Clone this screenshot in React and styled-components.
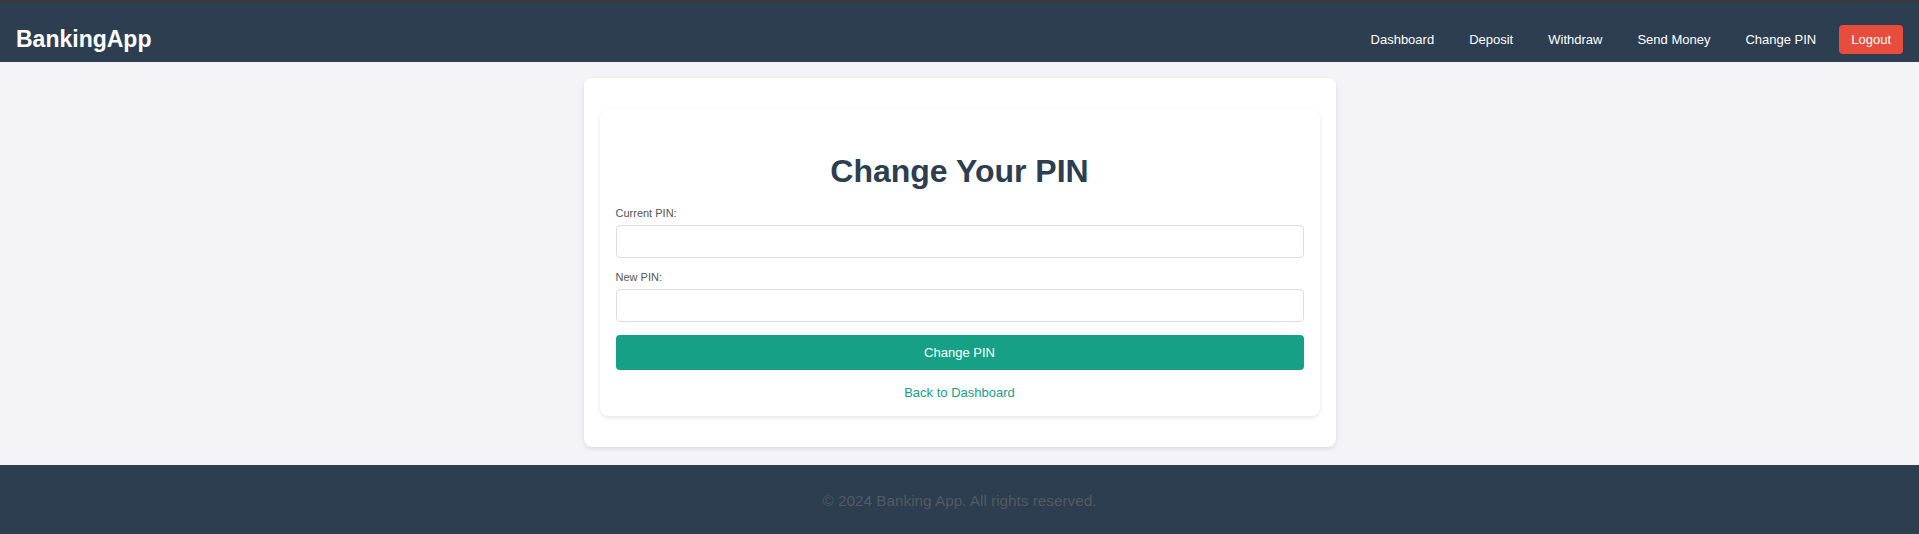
import styled, { createGlobalStyle } from "styled-components";

const GlobalStyle = createGlobalStyle`
  body {
    margin: 0;
    font-family: "Liberation Sans", Arial, sans-serif;
    background-color: #f4f4f8;
  }
`;

const Header = styled.header`
  display: flex;
  justify-content: space-between;
  align-items: center;
  padding: 15px 16px 0;
  box-sizing: border-box;
  height: 62px;
  border-top: 2px solid #3a3a3a;
  background-color: #2c3e50;
`;

const Logo = styled.div`
  font-size: 23px;
  font-weight: 700;
  color: #ffffff;
`;

const Nav = styled.nav`
  display: flex;
  align-items: center;
  gap: 11px;
`;

const NavLink = styled.a`
  padding: 6px 12px;
  font-size: 13px;
  color: #ffffff;
  text-decoration: none;
  cursor: pointer;
`;

const LogoutButton = styled.button`
  border: none;
  padding: 7px 12px;
  border-radius: 4px;
  font-family: inherit;
  font-size: 13px;
  color: #ffffff;
  background-color: #e74c3c;
  cursor: pointer;
`;

const Main = styled.main`
  padding: 16px 0 18px;
  background-color: #f4f4f8;
`;

const Container = styled.div`
  width: 752px;
  margin: 0 auto;
  padding: 32px 16px 31px;
  box-sizing: border-box;
  border-radius: 8px;
  background-color: #ffffff;
  box-shadow: 0 2px 4px rgba(0, 0, 0, 0.1);
`;

const FormCard = styled.div`
  padding: 16px;
  border-radius: 8px;
  background-color: #ffffff;
  box-shadow: 0 2px 4px rgba(0, 0, 0, 0.1);
`;

const Title = styled.h1`
  margin: 27px 0 17px;
  font-size: 32px;
  font-weight: 700;
  text-align: center;
  color: #2c3e50;
`;

const Label = styled.label`
  display: block;
  margin-bottom: 6px;
  font-size: 11px;
  color: #555555;
`;

const Input = styled.input`
  display: block;
  width: 100%;
  height: 33px;
  margin: 0 0 13px;
  padding: 0 10px;
  box-sizing: border-box;
  border: 1px solid #dddddd;
  border-radius: 4px;
  font-family: inherit;
  font-size: 13px;
`;

const SubmitButton = styled.button`
  display: block;
  width: 100%;
  height: 35px;
  border: none;
  border-radius: 4px;
  font-family: inherit;
  font-size: 13px;
  color: #ffffff;
  background-color: #16a085;
  cursor: pointer;
`;

const BackText = styled.p`
  margin: 15px 0 0;
  font-size: 13px;
  text-align: center;
`;

const BackLink = styled.a`
  color: #16a085;
  text-decoration: none;
`;

const Footer = styled.footer`
  padding: 27px 0 28px;
  font-size: 15.3px;
  text-align: center;
  color: #545a60;
  background-color: #2c3e50;
`;

const links = ["Dashboard", "Deposit", "Withdraw", "Send Money", "Change PIN"];

const App = () => {
  return (
    <>
      <GlobalStyle />
      <Header>
        <Logo>BankingApp</Logo>
        <Nav>
          {links.map((l) => (
            <NavLink key={l}>{l}</NavLink>
          ))}
          <LogoutButton>Logout</LogoutButton>
        </Nav>
      </Header>
      <Main>
        <Container>
          <FormCard>
            <Title>Change Your PIN</Title>
            <form onSubmit={(e) => e.preventDefault()}>
              <Label htmlFor="current">Current PIN:</Label>
              <Input id="current" type="password" />
              <Label htmlFor="newpin">New PIN:</Label>
              <Input id="newpin" type="password" />
              <SubmitButton type="submit">Change PIN</SubmitButton>
            </form>
            <BackText>
              <BackLink>Back to Dashboard</BackLink>
            </BackText>
          </FormCard>
        </Container>
      </Main>
      <Footer>© 2024 Banking App. All rights reserved.</Footer>
    </>
  );
};

export default App;
